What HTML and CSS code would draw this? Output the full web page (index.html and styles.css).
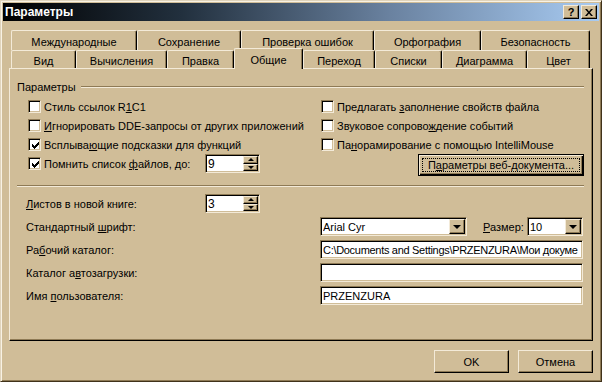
FILE: index.html
```html
<!DOCTYPE html>
<html lang="ru">
<head>
    <meta charset="UTF-8">
    <title>Параметры</title>
    <link rel="stylesheet" href="styles.css">
</head>
<body>

<div class="window">
    <!-- Title bar -->
    <div class="titlebar">
        <span class="title">Параметры</span>
        <div class="caption-buttons">
            <span class="cap-btn">?</span>
            <span class="cap-btn">
                <svg width="8" height="7" viewBox="0 0 8 7"><path d="M0 0h2l2 2.5L6 0h2L5 3.5 8 7H6L4 4.5 2 7H0l3-3.5z" fill="#000"/></svg>
            </span>
        </div>
    </div>

    <!-- Tabs -->
    <div class="tabs">
        <div class="tab-row back">
            <div class="tab">Международные</div>
            <div class="tab">Сохранение</div>
            <div class="tab">Проверка ошибок</div>
            <div class="tab">Орфография</div>
            <div class="tab">Безопасность</div>
        </div>
        <div class="tab-row front">
            <div class="tab">Вид</div>
            <div class="tab">Вычисления</div>
            <div class="tab">Правка</div>
            <div class="tab active">Общие</div>
            <div class="tab">Переход</div>
            <div class="tab">Списки</div>
            <div class="tab">Диаграмма</div>
            <div class="tab">Цвет</div>
        </div>
    </div>

    <div class="panel">
        <div class="group-title"><span>Параметры</span></div>

        <div class="options">
            <label class="check"><span class="box"></span><span>Стиль ссылок R<u>1</u>C1</span></label>
            <label class="check"><span class="box"></span><span>Предлагать <u>з</u>аполнение свойств файла</span></label>

            <label class="check"><span class="box"></span><span><u>И</u>гнорировать DDE-запросы от других приложений</span></label>
            <label class="check"><span class="box"></span><span>Звуковое сопрово<u>ж</u>дение событий</span></label>

            <label class="check"><span class="box checked"><svg width="7" height="7" viewBox="0 0 7 7"><path d="M0 2h1v1h1v1h1V3h1V2h1V1h1V0h1v3H6v1H5v1H4v1H3v1H2V6H1V5H0z" fill="#000"/></svg></span><span>Всплыва<u>ю</u>щие подсказки для функций</span></label>
            <label class="check"><span class="box"></span><span>Па<u>н</u>орамирование с помощью IntelliMouse</span></label>

            <div class="spin-row">
                <label class="check wide"><span class="box checked"><svg width="7" height="7" viewBox="0 0 7 7"><path d="M0 2h1v1h1v1h1V3h1V2h1V1h1V0h1v3H6v1H5v1H4v1H3v1H2V6H1V5H0z" fill="#000"/></svg></span><span>Помнить список <u>ф</u>айлов, до:</span></label>
                <div class="field spin">
                    <span class="value">9</span>
                    <div class="spin-buttons">
                        <span class="spin-btn"><i class="tri-up"></i></span>
                        <span class="spin-btn"><i class="tri-down"></i></span>
                    </div>
                </div>
            </div>
            <button class="btn default web-btn"><span class="focus">П<u>а</u>раметры веб-документа...</span></button>
        </div>

        <div class="divider"></div>

        <div class="fields">
            <span class="label"><u>Л</u>истов в новой книге:</span>
            <div class="field spin">
                <span class="value">3</span>
                <div class="spin-buttons">
                    <span class="spin-btn"><i class="tri-up"></i></span>
                    <span class="spin-btn"><i class="tri-down"></i></span>
                </div>
            </div>

            <span class="label">Стандартный <u>ш</u>рифт:</span>
            <div class="font-row">
                <div class="field combo font-name">
                    <span class="value">Arial Cyr</span>
                    <span class="drop-btn"><i class="tri-drop"></i></span>
                </div>
                <span class="size-label"><u>Р</u>азмер:</span>
                <div class="field combo font-size">
                    <span class="value">10</span>
                    <span class="drop-btn"><i class="tri-drop"></i></span>
                </div>
            </div>

            <span class="label">Ра<u>б</u>очий каталог:</span>
            <div class="field wide-field"><span class="value path">C:\Documents and Settings\PRZENZURA\Мои докуме</span></div>

            <span class="label">Каталог а<u>в</u>тозагрузки:</span>
            <div class="field wide-field"><span class="value"></span></div>

            <span class="label">Имя <u>п</u>ользователя:</span>
            <div class="field wide-field"><span class="value">PRZENZURA</span></div>
        </div>
    </div>

    <!-- Dialog buttons -->
    <div class="buttons">
        <button class="btn">OK</button>
        <button class="btn">Отмена</button>
    </div>
</div>

</body>
</html>
```

FILE: styles.css
```css
body {
    margin: 0;
    font-family: "Liberation Sans", Arial, sans-serif;
    font-size: 11px;
    color: #000;
    background-color: #d0bd98;
}
u {
    text-decoration-thickness: 1px;
    text-underline-offset: 1px;
}
.window {
    width: 602px;
    height: 382px;
    box-sizing: border-box;
    padding: 2px;
    display: flex;
    flex-direction: column;
    background-color: #d0bd98;
    border: 1px solid;
    border-color: #e0d4bc #40321a #40321a #e0d4bc;
    box-shadow: inset 1px 1px 0 #f8f2e4, inset -1px -1px 0 #8e7a55;
}

/* title bar */
.titlebar {
    height: 18px;
    display: flex;
    align-items: center;
    padding: 0 2px;
    background: linear-gradient(to right, #000 0%, #22303e 30%, #6a82a0 65%, #a8cbf2 100%);
    color: #fff;
}
.title {
    font-weight: bold;
    font-size: 12px;
}
.caption-buttons {
    margin-left: auto;
    display: flex;
    gap: 2px;
}
.cap-btn {
    width: 16px;
    height: 14px;
    box-sizing: border-box;
    display: flex;
    align-items: center;
    justify-content: center;
    background-color: #d0bd98;
    color: #000;
    font-weight: bold;
    font-size: 11px;
    border: 1px solid;
    border-color: #f3ead8 #000 #000 #f3ead8;
    box-shadow: inset -1px -1px 0 #8e7a55;
}

/* tabs */
.tabs {
    margin: 9px 0 0 8px;
}
.tab-row {
    display: grid;
}
.tab-row.back {
    grid-template-columns: 126px 104px 133px 107px 109px;
    height: 20px;
}
.tab-row.front {
    grid-template-columns: 65px 91px 67px 69px 72px 67px 85px 63px;
    height: 18px;
}
.tab {
    box-sizing: border-box;
    background-color: #d0bd98;
    border-left: 1px solid #f3ead8;
    border-top: 1px solid #f3ead8;
    border-right: 1px solid #000;
    border-radius: 2px 2px 0 0;
    box-shadow: inset -1px 0 0 #8e7a55;
    text-align: center;
    line-height: 14px;
    padding-top: 3px;
    white-space: nowrap;
}
.tab-row.back .tab {
    padding-top: 4px;
}
.tab.active {
    height: 21px;
    margin-top: -2px;
    margin-bottom: -1px;
    padding-top: 4px;
    z-index: 1;
}

/* main panel */
.panel {
    margin: 0 6px;
    height: 273px;
    box-sizing: border-box;
    padding: 11px 8px 0 7px;
    border: 1px solid;
    border-color: #f3ead8 #000 #000 #f3ead8;
    box-shadow: inset -1px -1px 0 #8e7a55;
}
.group-title {
    height: 13px;
    display: flex;
    align-items: center;
    gap: 5px;
}
.group-title::after {
    content: "";
    flex: 1;
    border-top: 1px solid #8e7a55;
    border-bottom: 1px solid #f3ead8;
}
.options {
    margin: 4px 0 0 11px;
    display: grid;
    grid-template-columns: 293px 1fr;
    grid-auto-rows: 19px;
}
.check {
    display: flex;
    align-items: center;
    gap: 3px;
    white-space: nowrap;
}
.check.wide {
    width: 177px;
}
.box {
    width: 13px;
    height: 13px;
    box-sizing: border-box;
    display: flex;
    align-items: center;
    justify-content: center;
    background-color: #fff;
    border: 1px solid;
    border-color: #8e7a55 #f3ead8 #f3ead8 #8e7a55;
    box-shadow: inset 1px 1px 0 #000, inset -1px -1px 0 #d0bd98;
}
.box svg {
    margin: 1px 0 0 1px;
}
.spin-row {
    display: flex;
    align-items: center;
}
.divider {
    margin-top: 12px;
    border-top: 1px solid #8e7a55;
    border-bottom: 1px solid #f3ead8;
}

/* sunken input fields */
.field {
    height: 19px;
    box-sizing: border-box;
    display: flex;
    align-items: center;
    background-color: #fff;
    border: 1px solid;
    border-color: #8e7a55 #f3ead8 #f3ead8 #8e7a55;
    box-shadow: inset 1px 1px 0 #000, inset -1px -1px 0 #d0bd98;
    padding: 1px 1px 1px 2px;
    overflow: hidden;
}
.field .value {
    flex: 1;
    white-space: nowrap;
    overflow: hidden;
    padding-top: 1px;
}
.field .path {
    letter-spacing: -0.3px;
}
.spin {
    width: 55px;
    font-size: 12px;
}
.spin-buttons {
    width: 15px;
    height: 15px;
    display: flex;
    flex-direction: column;
}
.spin-btn,
.drop-btn {
    box-sizing: border-box;
    display: flex;
    align-items: center;
    justify-content: center;
    background-color: #d0bd98;
    border: 1px solid;
    border-color: #f3ead8 #000 #000 #f3ead8;
    box-shadow: inset -1px -1px 0 #8e7a55;
}
.spin-btn {
    flex: 1;
}
.drop-btn {
    width: 16px;
    height: 15px;
}
.tri-up,
.tri-down,
.tri-drop {
    width: 0;
    height: 0;
    border-left: 3px solid transparent;
    border-right: 3px solid transparent;
}
.tri-up {
    border-bottom: 3px solid #000;
}
.tri-down {
    border-top: 3px solid #000;
}
.tri-drop {
    border-left-width: 4px;
    border-right-width: 4px;
    border-top: 4px solid #000;
}

.fields {
    margin: 7px 1px 0 9px;
    display: grid;
    grid-template-columns: 179px 115px 1fr;
    grid-auto-rows: 19px;
    row-gap: 4px;
    align-items: center;
}
.fields .label {
    grid-column: 1;
    white-space: nowrap;
}
.fields .spin {
    grid-column: 2;
}
.font-row,
.wide-field {
    grid-column: 3;
}
.font-row {
    display: flex;
    align-items: center;
}
.font-name {
    width: 147px;
}
.size-label {
    margin-left: 16px;
}
.font-size {
    width: 56px;
    margin-left: auto;
}

/* buttons */
.btn {
    box-sizing: border-box;
    height: 23px;
    padding: 0;
    font: inherit;
    color: #000;
    background-color: #d0bd98;
    border: 1px solid;
    border-color: #f3ead8 #000 #000 #f3ead8;
    box-shadow: inset -1px -1px 0 #8e7a55;
}
.btn.default {
    border-color: #000;
    box-shadow: inset 1px 1px 0 #f3ead8, inset -1px -1px 0 #000, inset -2px -2px 0 #8e7a55;
}
.web-btn {
    justify-self: end;
    align-self: start;
    width: 166px;
    height: 22px;
    padding: 3px;
}
.focus {
    display: block;
    height: 100%;
    box-sizing: border-box;
    border: 1px dotted #000;
    line-height: 12px;
}
.buttons {
    margin: 9px 6px 0 0;
    display: flex;
    justify-content: flex-end;
    gap: 9px;
}
.buttons .btn {
    width: 75px;
}
```
